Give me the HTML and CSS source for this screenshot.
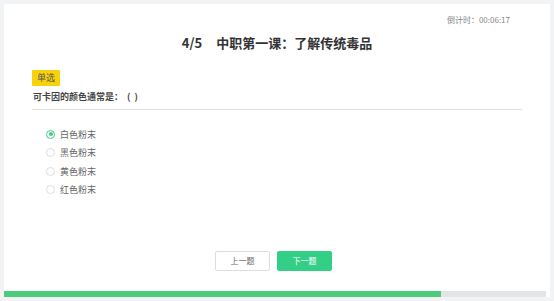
FILE: index.html
```html
<!DOCTYPE html>
<html>

<head>
  <title>中职第一课</title>
  <meta charset="utf-8">
  <link rel="stylesheet" href="styles.css">
</head>

<body>
  <div class="card">
    <div class="timer">倒计时：00:06:17</div>
    <h2 class="title"><span class="num">4/5</span>中职第一课：了解传统毒品</h2>

    <div class="question">
      <span class="tag">单选</span>
      <div class="stem">可卡因的颜色通常是：&nbsp; (&nbsp;&nbsp;)</div>
    </div>

    <ul class="options">
      <li class="checked"><span class="radio"></span>白色粉末</li>
      <li><span class="radio"></span>黑色粉末</li>
      <li><span class="radio"></span>黄色粉末</li>
      <li><span class="radio"></span>红色粉末</li>
    </ul>

    <div class="btns">
      <span class="btn prev">上一题</span>
      <span class="btn next">下一题</span>
    </div>

    <div class="progress">
      <div class="bar" style="width: 80.7%;"></div>
    </div>
  </div>
</body>

</html>
```

FILE: styles.css
```css
* {
  box-sizing: border-box;
}

body {
  margin: 0;
  background: #f2f3f5;
  font-family: "Noto Sans CJK SC", "Noto Sans", sans-serif;
  color: #333;
}

/* white panel */
.card {
  margin: 4px 4px 0 4px;
  height: 293px;
  background: #fff;
  padding-top: 10px;
  display: flex;
  flex-direction: column;
}

.timer {
  text-align: right;
  font-size: 8px;
  color: #888;
  padding-right: 40px;
  line-height: 12px;
}

.title {
  margin: 8px 0 0 0;
  text-align: center;
  font-size: 13px;
  font-weight: bold;
  color: #333;
  line-height: 18px;
}

.title .num {
  margin-right: 14px;
}

.question {
  margin: 10px 28px 0 28px;
  border-bottom: 1px solid #e2e2e2;
  padding-bottom: 6px;
}

.tag {
  display: inline-block;
  background: #f7d20c;
  color: #555;
  font-size: 9px;
  line-height: 16px;
  padding: 0 5px;
  border-radius: 1px;
}

.stem {
  font-size: 9px;
  font-weight: bold;
  color: #444;
  line-height: 13px;
  margin-top: 4px;
  padding-left: 1px;
}

/* answer list */
.options {
  list-style: none;
  margin: 15px 0 0 42px;
  padding: 0;
}

.options li {
  display: flex;
  align-items: center;
  font-size: 9px;
  color: #666;
  height: 18.5px;
}

.radio {
  width: 9px;
  height: 9px;
  border: 1px solid #ddd;
  border-radius: 50%;
  margin-right: 5px;
  position: relative;
}

.options li.checked .radio {
  border-color: #3ecb88;
}

.options li.checked .radio::after {
  content: '';
  position: absolute;
  left: 1.5px;
  top: 1.5px;
  width: 4px;
  height: 4px;
  border-radius: 50%;
  background: #3ecb88;
}

.btns {
  margin-top: auto;
  display: flex;
  justify-content: center;
  gap: 7px;
  margin-bottom: 20px;
  padding-right: 7px;
}

.btn {
  width: 55px;
  height: 20px;
  line-height: 18px;
  text-align: center;
  font-size: 8px;
  border-radius: 2px;
  border: 1px solid #ddd;
  color: #666;
  background: #fff;
}

.btn.next {
  background: #33cf86;
  border-color: #33cf86;
  color: #fff;
}

.progress {
  height: 6px;
  background: #e4e4e4;
  margin-right: 4px;
}

.bar {
  height: 100%;
  background: #4ccb7e;
}
```
